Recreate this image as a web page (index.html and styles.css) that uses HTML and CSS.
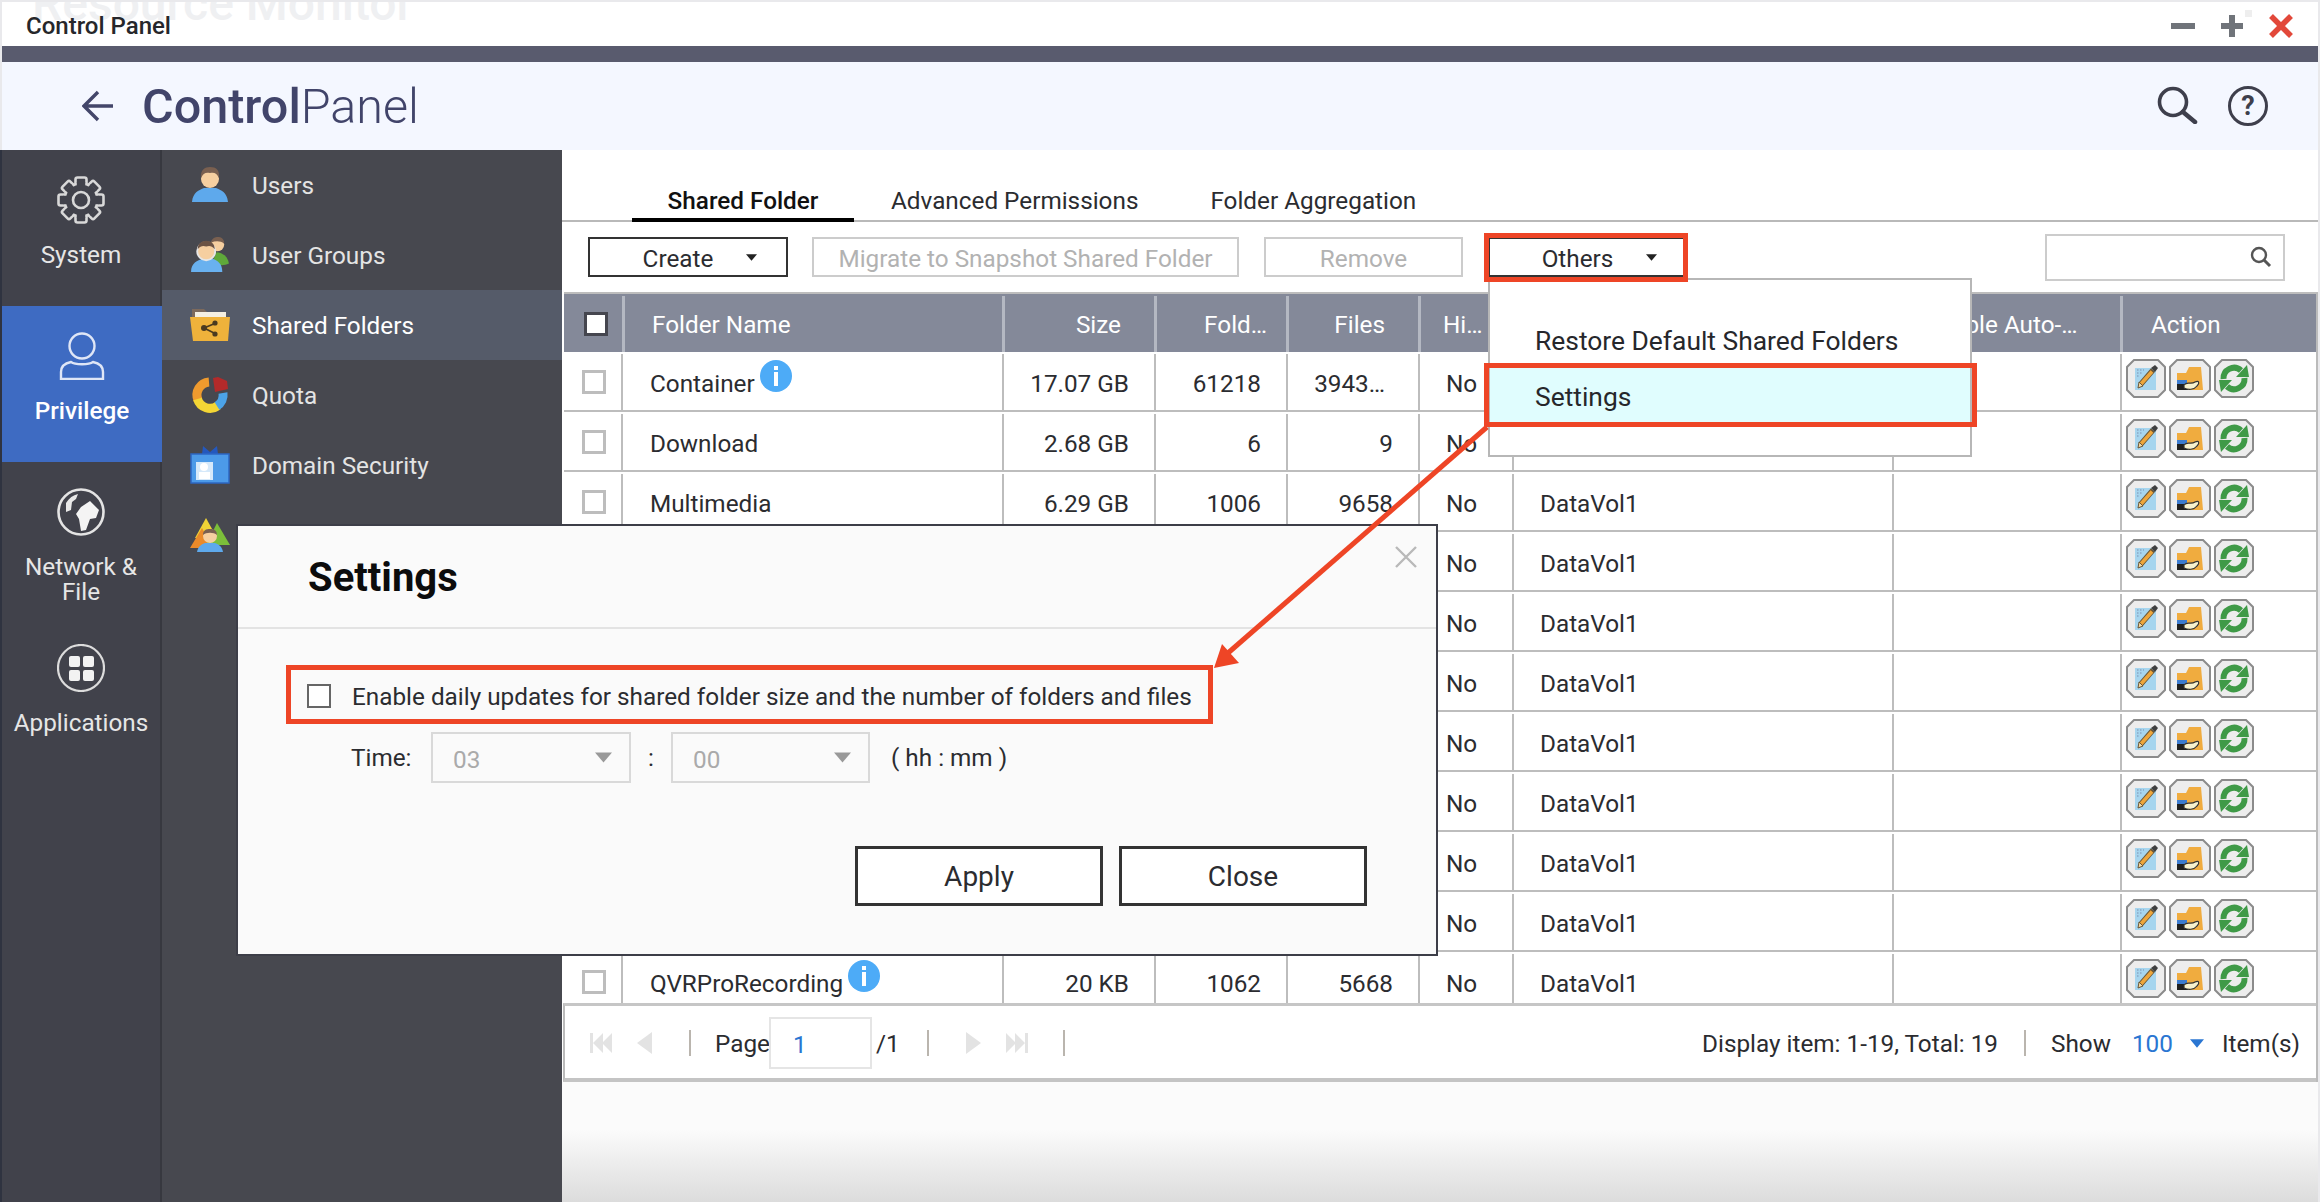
FILE: index.html
```html
<!DOCTYPE html>
<html lang="en">
<head>
<meta charset="utf-8">
<title>Control Panel</title>
<link rel="stylesheet" href="styles.css">
</head>
<body>
<svg class="defs" width="0" height="0" aria-hidden="true">
  <symbol id="act-edit" viewBox="0 0 40 39">
    <polygon points="8,1 32,1 39,8 39,31 32,38 8,38 1,31 1,8" fill="#ededed" stroke="#8b8b8b" stroke-width="2"/>
    <rect x="9" y="9" width="21" height="22" fill="#a6d5ee"/>
    <path d="M11 11h7M11 14h5M11 17h3" stroke="#8aa6c4" stroke-width="1.4" stroke-dasharray="1.5 1.5"/>
    <path d="M15 25 L27 11" stroke="#6a5636" stroke-width="5.5"/>
    <path d="M15 25 L26 12.500" stroke="#eda63c" stroke-width="3.6"/>
    <path d="M25 9 L29 6 L32 9 L29 13 Z" fill="#3f3f3f"/>
    <path d="M12 29 L13 23 L17 27 Z" fill="#f3d9a4" stroke="#6a5636" stroke-width="1"/>
  </symbol>
  <symbol id="act-folder" viewBox="0 0 42 39">
    <polygon points="8,1 34,1 41,8 41,31 34,38 8,38 1,31 1,8" fill="#ededed" stroke="#8b8b8b" stroke-width="2"/>
    <path d="M8 14 L17 14 L20 8 L32 8 L34 31 L8 31 Z" fill="#f0ac3f"/>
    <rect x="8" y="21" width="10" height="4" fill="#3b7bd0"/>
    <rect x="8" y="25" width="11" height="6" fill="#1f1f1f"/>
    <path d="M15 26 C18 22 22 26 26 23 C30 21 31 24 28 27 C25 31 19 31 15 29 Z" fill="#f7f1cc" stroke="#333" stroke-width="1.2"/>
  </symbol>
  <symbol id="act-sync" viewBox="0 0 40 39">
    <polygon points="8,1 32,1 39,8 39,31 32,38 8,38 1,31 1,8" fill="#ededed" stroke="#8b8b8b" stroke-width="2"/>
    <path d="M9.500 20 A10.500 10.500 0 0 1 27 11.500" fill="none" stroke="#3f9a47" stroke-width="6"/>
    <polygon points="22,18 35,18 33,6" fill="#3f9a47"/>
    <g transform="rotate(180 20 19.5)">
      <path d="M9.500 20 A10.500 10.500 0 0 1 27 11.500" fill="none" stroke="#3f9a47" stroke-width="6"/>
      <polygon points="22,18 35,18 33,6" fill="#3f9a47"/>
    </g>
  </symbol>
  <symbol id="info" viewBox="0 0 32 32">
    <circle cx="16" cy="16" r="16" fill="#4dabf7"/>
    <rect x="14" y="6" width="4" height="4" fill="#fff"/>
    <rect x="14" y="12" width="4" height="14" fill="#fff"/>
  </symbol>
  <symbol id="caret" viewBox="0 0 10 6"><path d="M0 0H10L5 6Z"/></symbol>
  <symbol id="skip" viewBox="0 0 22 24"><path d="M0 2h3v20H0zM13 2v20L3 12zM22 2v20L12 12z"/></symbol>
</svg>

<div class="window">
  <header class="titlebar">
    <span class="ghost-title">Resource Monitor</span>
    <span class="title-text">Control Panel</span>
    <div class="win-controls">
      <svg class="win-ico" viewBox="0 0 24 24"><path d="M0 12H24" stroke="#70747a" stroke-width="6"/></svg>
      <svg class="win-ico" viewBox="0 0 24 24"><path d="M1 12H23M12 1V23" stroke="#70747a" stroke-width="6"/></svg>
      <svg class="win-ico" viewBox="0 0 24 24"><path d="M2 2L22 22M22 2L2 22" stroke="#e2483a" stroke-width="5.5"/></svg>
    </div>
  </header>
  <div class="band"></div>
  <div class="app-header">
    <svg class="back" viewBox="0 0 32 32"><path d="M31 16H3M16 2L2 16L16 30" fill="none" stroke="#43466a" stroke-width="3.4"/></svg>
    <h1 class="app-title"><b>Control</b>Panel</h1>
    <div class="head-tools">
      <svg class="head-ico" viewBox="0 0 42 38"><circle cx="16" cy="16" r="13.5" fill="none" stroke="#3e3f4c" stroke-width="3.6"/><path d="M26 26L38 36" stroke="#3e3f4c" stroke-width="4.5" stroke-linecap="round"/></svg>
      <div class="help">?</div>
    </div>
  </div>

  <div class="main">
    <nav class="rail">
      <div class="rail-item">
        <svg class="rail-ico" viewBox="-24 -24 48 48">
          <g fill="#41424b" stroke="#d8d8d8" stroke-width="2.6">
            <rect x="-5.5" y="-22.5" width="11" height="9" rx="2"/>
            <rect x="-5.5" y="-22.5" width="11" height="9" rx="2" transform="rotate(45)"/>
            <rect x="-5.5" y="-22.5" width="11" height="9" rx="2" transform="rotate(90)"/>
            <rect x="-5.5" y="-22.5" width="11" height="9" rx="2" transform="rotate(135)"/>
            <rect x="-5.5" y="-22.5" width="11" height="9" rx="2" transform="rotate(180)"/>
            <rect x="-5.5" y="-22.5" width="11" height="9" rx="2" transform="rotate(225)"/>
            <rect x="-5.5" y="-22.5" width="11" height="9" rx="2" transform="rotate(270)"/>
            <rect x="-5.5" y="-22.5" width="11" height="9" rx="2" transform="rotate(315)"/>
            <circle r="16.5"/>
          </g>
          <g fill="#41424b">
            <rect x="-4.2" y="-18" width="8.4" height="4"/>
            <rect x="-4.2" y="-18" width="8.4" height="4" transform="rotate(45)"/>
            <rect x="-4.2" y="-18" width="8.4" height="4" transform="rotate(90)"/>
            <rect x="-4.2" y="-18" width="8.4" height="4" transform="rotate(135)"/>
            <rect x="-4.2" y="-18" width="8.4" height="4" transform="rotate(180)"/>
            <rect x="-4.2" y="-18" width="8.4" height="4" transform="rotate(225)"/>
            <rect x="-4.2" y="-18" width="8.4" height="4" transform="rotate(270)"/>
            <rect x="-4.2" y="-18" width="8.4" height="4" transform="rotate(315)"/>
          </g>
          <circle r="8" fill="none" stroke="#d8d8d8" stroke-width="2.6"/>
        </svg>
        <span>System</span>
      </div>
      <div class="rail-item active">
        <svg class="rail-ico" viewBox="0 0 48 48"><circle cx="24" cy="14" r="12.5" fill="none" stroke="#dfe6f6" stroke-width="2.4"/><path d="M3 47V40C3 33 8 31 13 30C17 33 31 33 35 30C40 31 45 33 45 40V47Z" fill="none" stroke="#dfe6f6" stroke-width="2.4"/></svg>
        <span>Privilege</span>
      </div>
      <div class="rail-item">
        <svg class="rail-ico" viewBox="0 0 48 48"><circle cx="24" cy="24" r="22.5" fill="none" stroke="#e4e4e4" stroke-width="2.6"/><path d="M9 15C12 10 16 7 21 6L19 11L15 14L14 22L9 24Z" fill="#e8e8e8"/><path d="M24 19L33 13L42 22L39 30L33 31L29 42L24 43L22 31L19 26Z" fill="#f4f4f4"/></svg>
        <span>Network &amp;<br>File</span>
      </div>
      <div class="rail-item">
        <svg class="rail-ico" viewBox="0 0 48 48"><circle cx="24" cy="24" r="23" fill="none" stroke="#dcdcdc" stroke-width="2.2"/><g fill="#f2f2f2"><rect x="12" y="12" width="11" height="11" rx="2"/><rect x="26" y="12" width="11" height="11" rx="2"/><rect x="12" y="26" width="11" height="11" rx="2"/><rect x="26" y="26" width="11" height="11" rx="2"/></g></svg>
        <span>Applications</span>
      </div>
    </nav>

    <nav class="subnav">
      <div class="sub-item">
        <svg class="sub-ico" viewBox="0 0 40 36"><path d="M2 35C3 25 9 23 14 21H26C31 23 37 25 38 35Z" fill="#5ea9ec"/><circle cx="20" cy="12" r="9" fill="#f6cfa0"/><path d="M11 11C10 3 15 0 20 0C26 0 30 3 29 11C27 6 24 5 20 6C16 5 13 6 11 11Z" fill="#7a6050"/></svg>
        <span>Users</span>
      </div>
      <div class="sub-item">
        <svg class="sub-ico" viewBox="0 0 40 38"><path d="M22 27L27 16C32 16 39 20 40 28C34 31 28 30 22 27Z" fill="#5fa83a"/><circle cx="28" cy="8" r="7" fill="#f6cfa0"/><path d="M21 6C22 1 26 0 28 0C32 0 35 2 35 7C31 4 26 4 21 6Z" fill="#7a6050"/><path d="M0 37C0 27 7 25 12 23H23C28 25 33 28 33 37Z" fill="#69b1ef"/><circle cx="16" cy="15" r="9.5" fill="#f6cfa0" stroke="#e6e6e6" stroke-width="2"/><path d="M7 13C7 7 11 4 16 4C21 4 25 7 25 13C22 9 19 9 16 10C13 9 10 9 7 13Z" fill="#6c5344"/></svg>
        <span>User Groups</span>
      </div>
      <div class="sub-item current">
        <svg class="sub-ico" viewBox="0 0 40 32"><path d="M2 0H14L17 3H36V10H2Z" fill="#7d6a5c"/><rect x="5" y="3" width="31" height="8" fill="#f4efe2"/><path d="M0 8H40L38 32H3Z" fill="#efb23b"/><g stroke="#4a3a20" stroke-width="1.8"><path d="M14 19L26 14M14 19L26 25"/></g><g fill="#4a3a20"><circle cx="14" cy="19" r="3"/><circle cx="25" cy="14" r="2.6"/><circle cx="25" cy="25" r="2.6"/></g></svg>
        <span>Shared Folders</span>
      </div>
      <div class="sub-item">
        <svg class="sub-ico" viewBox="0 0 36 36">
          <g fill="none" stroke-width="9"><path d="M6 23A13 13 0 0 1 17 5" stroke="#ef9a2e"/><path d="M5.500 22A13 13 0 0 0 26 28.500" stroke="#f4d635"/><path d="M25 29A13 13 0 0 0 31 16" stroke="#4ca3e8"/></g>
          <path d="M21 1L26 0L35 4L36 12L23 15Z" fill="#b32a2a"/>
        </svg>
        <span>Quota</span>
      </div>
      <div class="sub-item">
        <svg class="sub-ico tall" viewBox="0 0 40 38"><path d="M13 0L20 6L27 0L28 8H12Z" fill="#2458bd"/><rect x="1" y="8" width="38" height="29" fill="#4c9ae8" stroke="#2c66c2" stroke-width="1.5"/><rect x="6" y="16" width="17" height="18" fill="#d6e9fa"/><circle cx="14" cy="21" r="4" fill="#fff"/><rect x="9" y="26" width="11" height="7" fill="#fff"/></svg>
        <span>Domain Security</span>
      </div>
      <div class="sub-item">
        <svg class="sub-ico" viewBox="0 0 40 34"><path d="M16 0L27 20H5Z" fill="#efd336"/><path d="M12 10L23 30H0Z" fill="#ea8a2a"/><path d="M27 5L40 27H16Z" fill="#7cbf3a"/><path d="M7 34C8 28 12 26 15 25H25C28 26 32 28 33 34Z" fill="#5ea9ec"/><circle cx="20" cy="18" r="7" fill="#f6cfa0"/><path d="M13 17C13 12 16 11 20 11C24 11 27 12 27 17C24 14 16 14 13 17Z" fill="#7a6050"/></svg>
      </div>
    </nav>

    <section class="content">
      <div class="tabs">
        <div class="tab selected">Shared Folder</div>
        <div class="tab">Advanced Permissions</div>
        <div class="tab">Folder Aggregation</div>
      </div>
      <div class="toolbar">
        <div class="btn w-create"><span>Create</span><svg class="caret"><use href="#caret"/></svg></div>
        <div class="btn off w-migrate">Migrate to Snapshot Shared Folder</div>
        <div class="btn off w-remove">Remove</div>
        <div class="btn w-others"><span>Others</span><svg class="caret"><use href="#caret"/></svg></div>
        <div class="search">
          <svg class="search-ico" viewBox="0 0 22 22"><circle cx="9" cy="9" r="7" fill="none" stroke="#555" stroke-width="2.4"/><path d="M14 14L20 20" stroke="#555" stroke-width="3"/></svg>
        </div>
      </div>

      <div class="grid">
        <div class="thead">
          <div class="th"><i class="box dark"></i></div>
          <div class="th pl">Folder Name</div>
          <div class="th r pr34">Size</div>
          <div class="th r pr19">Fold…</div>
          <div class="th r pr33">Files</div>
          <div class="th hid">Hi…</div>
          <div class="th"></div>
          <div class="th auto">Enable Auto-…</div>
          <div class="th act">Action</div>
        </div>
        <div class="tbody">
          <div class="row"><div class="td c"><i class="box"></i></div><div class="td pl name">Container<svg class="info"><use href="#info"/></svg></div><div class="td r">17.07 GB</div><div class="td r">61218</div><div class="td r pr34">3943…</div><div class="td no">No</div><div class="td vol"></div><div class="td"></div><div class="td acts"><svg class="a1"><use href="#act-edit"/></svg><svg class="a2"><use href="#act-folder"/></svg><svg class="a1"><use href="#act-sync"/></svg></div></div>
          <div class="row"><div class="td c"><i class="box"></i></div><div class="td pl">Download</div><div class="td r">2.68 GB</div><div class="td r">6</div><div class="td r">9</div><div class="td no">No</div><div class="td vol"></div><div class="td"></div><div class="td acts"><svg class="a1"><use href="#act-edit"/></svg><svg class="a2"><use href="#act-folder"/></svg><svg class="a1"><use href="#act-sync"/></svg></div></div>
          <div class="row"><div class="td c"><i class="box"></i></div><div class="td pl">Multimedia</div><div class="td r">6.29 GB</div><div class="td r">1006</div><div class="td r">9658</div><div class="td no">No</div><div class="td vol">DataVol1</div><div class="td"></div><div class="td acts"><svg class="a1"><use href="#act-edit"/></svg><svg class="a2"><use href="#act-folder"/></svg><svg class="a1"><use href="#act-sync"/></svg></div></div>
          <div class="row"><div class="td c"></div><div class="td"></div><div class="td"></div><div class="td"></div><div class="td"></div><div class="td no">No</div><div class="td vol">DataVol1</div><div class="td"></div><div class="td acts"><svg class="a1"><use href="#act-edit"/></svg><svg class="a2"><use href="#act-folder"/></svg><svg class="a1"><use href="#act-sync"/></svg></div></div>
          <div class="row"><div class="td c"></div><div class="td"></div><div class="td"></div><div class="td"></div><div class="td"></div><div class="td no">No</div><div class="td vol">DataVol1</div><div class="td"></div><div class="td acts"><svg class="a1"><use href="#act-edit"/></svg><svg class="a2"><use href="#act-folder"/></svg><svg class="a1"><use href="#act-sync"/></svg></div></div>
          <div class="row"><div class="td c"></div><div class="td"></div><div class="td"></div><div class="td"></div><div class="td"></div><div class="td no">No</div><div class="td vol">DataVol1</div><div class="td"></div><div class="td acts"><svg class="a1"><use href="#act-edit"/></svg><svg class="a2"><use href="#act-folder"/></svg><svg class="a1"><use href="#act-sync"/></svg></div></div>
          <div class="row"><div class="td c"></div><div class="td"></div><div class="td"></div><div class="td"></div><div class="td"></div><div class="td no">No</div><div class="td vol">DataVol1</div><div class="td"></div><div class="td acts"><svg class="a1"><use href="#act-edit"/></svg><svg class="a2"><use href="#act-folder"/></svg><svg class="a1"><use href="#act-sync"/></svg></div></div>
          <div class="row"><div class="td c"></div><div class="td"></div><div class="td"></div><div class="td"></div><div class="td"></div><div class="td no">No</div><div class="td vol">DataVol1</div><div class="td"></div><div class="td acts"><svg class="a1"><use href="#act-edit"/></svg><svg class="a2"><use href="#act-folder"/></svg><svg class="a1"><use href="#act-sync"/></svg></div></div>
          <div class="row"><div class="td c"></div><div class="td"></div><div class="td"></div><div class="td"></div><div class="td"></div><div class="td no">No</div><div class="td vol">DataVol1</div><div class="td"></div><div class="td acts"><svg class="a1"><use href="#act-edit"/></svg><svg class="a2"><use href="#act-folder"/></svg><svg class="a1"><use href="#act-sync"/></svg></div></div>
          <div class="row"><div class="td c"></div><div class="td"></div><div class="td"></div><div class="td"></div><div class="td"></div><div class="td no">No</div><div class="td vol">DataVol1</div><div class="td"></div><div class="td acts"><svg class="a1"><use href="#act-edit"/></svg><svg class="a2"><use href="#act-folder"/></svg><svg class="a1"><use href="#act-sync"/></svg></div></div>
          <div class="row"><div class="td c"><i class="box"></i></div><div class="td pl name">QVRProRecording<svg class="info"><use href="#info"/></svg></div><div class="td r">20 KB</div><div class="td r">1062</div><div class="td r">5668</div><div class="td no">No</div><div class="td vol">DataVol1</div><div class="td"></div><div class="td acts"><svg class="a1"><use href="#act-edit"/></svg><svg class="a2"><use href="#act-folder"/></svg><svg class="a1"><use href="#act-sync"/></svg></div></div>
        </div>
        <div class="pager">
          <svg class="pg skip"><use href="#skip"/></svg>
          <svg class="pg prev" viewBox="0 0 15 24"><path d="M15 1V23L0 12Z"/></svg>
          <i class="sep s1"></i>
          <span class="pg-label">Page</span>
          <div class="pg-input">1</div>
          <span class="pg-total">/1</span>
          <i class="sep s2"></i>
          <svg class="pg next" viewBox="0 0 15 24"><path d="M0 1V23L15 12Z"/></svg>
          <svg class="pg skip flip"><use href="#skip"/></svg>
          <i class="sep s3"></i>
          <span class="pg-info">Display item: 1-19, Total: 19</span>
          <i class="sep s4"></i>
          <span>Show</span>
          <span class="pg-num">100</span>
          <svg class="pg-caret"><use href="#caret"/></svg>
          <span class="pg-items">Item(s)</span>
        </div>
      </div>
      <div class="below"></div>
    </section>
  </div>
</div>

<div class="menu">
  <div class="menu-item">Restore Default Shared Folders</div>
  <div class="menu-item hot">Settings</div>
</div>

<div class="dialog">
  <div class="dlg-head">
    <h2>Settings</h2>
    <svg class="dlg-x" viewBox="0 0 22 22"><path d="M1 1L21 21M21 1L1 21" stroke="#b9b9b9" stroke-width="2.4"/></svg>
  </div>
  <div class="dlg-body">
    <div class="dlg-check"><i class="box gray"></i><span>Enable daily updates for shared folder size and the number of folders and files</span></div>
    <div class="dlg-time">
      <span class="time-label">Time:</span>
      <div class="sel">03<svg class="sel-caret"><use href="#caret"/></svg></div>
      <span class="colon">:</span>
      <div class="sel s-b">00<svg class="sel-caret"><use href="#caret"/></svg></div>
      <span class="hhmm">( hh : mm )</span>
    </div>
    <div class="dlg-btns">
      <div class="dlg-btn">Apply</div>
      <div class="dlg-btn">Close</div>
    </div>
  </div>
</div>

<div class="mark m-others"></div>
<div class="mark m-settings"></div>
<div class="mark m-check"></div>
<svg class="arrow" viewBox="0 0 290 270"><path d="M283 7L24 233" stroke="#ee4526" stroke-width="5" fill="none"/><polygon points="10,248 18,224 35,243" fill="#ee4526"/></svg>
</body>
</html>
```
FILE: styles.css
```css
* { box-sizing: border-box; }
html, body { margin: 0; height: 100%; }
body {
  width: 2320px; height: 1202px; overflow: hidden; position: relative;
  font-family: Roboto, "Liberation Sans", sans-serif; font-size: 24.3px; color: #2b2c30;
  background: #e9e9ec; padding: 2px 2px 0;
}
body::before { content: ""; position: absolute; left: 0; top: 150px; width: 2px; bottom: 0; background: #2f3340; }
.defs { position: absolute; }
.box { display: block; width: 24px; height: 24px; background: #fff; border: 3px solid #bdbdbd; flex: none; }
.box.dark { border-color: #45464f; }
.box.gray { border: 2px solid #666; background: #fff; }

.window { height: 1200px; display: flex; flex-direction: column; }
.titlebar { height: 44px; flex: none; background: #fff; position: relative; overflow: hidden; display: flex; align-items: center; padding: 4px 25px 0 24px; }
.titlebar::after { content: ""; position: absolute; right: 66px; top: 8px; width: 7px; height: 7px; background: #eee; }
.ghost-title { position: absolute; left: 30px; top: -22px; font-size: 48px; line-height: 48px; color: #eff0f2; font-weight: 500; }
.title-text { position: relative; font-size: 24px; font-weight: 500; color: #26272b; }
.win-controls { margin-left: auto; display: flex; gap: 25px; align-items: center; }
.win-ico { width: 24px; height: 24px; display: block; }
.band { height: 16px; flex: none; background: #595b6e; }
.app-header { height: 88px; flex: none; background: #f4f7ff; display: flex; align-items: center; padding: 0 50px 0 80px; }
.back { width: 32px; height: 32px; margin-right: 28px; }
.app-title { margin: 0; font-size: 48.5px; font-weight: 300; color: #41446a; }
.app-title b { font-weight: 500; }
.head-tools { margin-left: auto; display: flex; align-items: center; gap: 29px; }
.head-ico { width: 42px; height: 38px; margin-top: -2px; }
.help { width: 40px; height: 40px; border: 3.5px solid #3e3f4c; border-radius: 50%; display: flex; align-items: center; justify-content: center; font-size: 27px; font-weight: 700; color: #3e3f4c; }

.main { flex: 1; min-height: 0; display: flex; }
.rail { width: 160px; flex: none; background: #41424b; border-right: 2px solid #37383f; }
.rail-item { height: 156px; padding-top: 26px; display: flex; flex-direction: column; align-items: center; color: #e6e6e6; line-height: 25px; text-align: center; }
.rail-item.active { background: #3e6bc2; color: #fff; font-weight: 500; margin-right: -2px; position: relative; }
.rail-ico { width: 48px; height: 48px; margin-bottom: 18px; flex: none; }
.subnav { width: 400px; flex: none; background: #47484f; }
.sub-item { height: 70px; display: flex; align-items: center; padding-left: 28px; gap: 22px; color: #e4e4e4; }
.sub-item span { padding-top: 1px; }
.sub-item.current { background: #555b69; color: #fff; }
.sub-ico { width: 40px; height: 36px; flex: none; }
.sub-ico.tall { height: 38px; }

.content { flex: 1; min-width: 0; display: flex; flex-direction: column; background: #fff; }
.tabs { height: 72px; flex: none; display: flex; align-items: flex-end; padding-left: 70px; border-bottom: 2px solid #b9b9b9; }
.tab { height: 41px; padding: 0 36px; line-height: 40px; margin-bottom: -2px; color: #2b2c30; }
.tab.selected { color: #111; font-weight: 500; border-bottom: 4px solid #000; height: 41px; width: 222px; text-align: center; padding: 0; margin-right: 1px; }
.toolbar { height: 70px; flex: none; display: flex; align-items: center; padding: 0 33px 0 26px; }
.btn { height: 40px; border: 2px solid #333; display: flex; align-items: center; justify-content: center; position: relative; padding-top: 3px; }
.btn.off { border-color: #ccc; color: #b2b2b2; }
.w-create { width: 200px; margin-right: 24px; padding-right: 20px; }
.w-migrate { width: 427px; margin-right: 25px; }
.w-remove { width: 199px; margin-right: 25px; }
.w-others { width: 197px; padding-right: 18px; }
.caret { position: absolute; right: 29px; top: 15px; width: 11px; height: 7px; fill: #222; }
.w-others .caret { right: 26px; }
.search { margin-left: auto; width: 240px; height: 47px; border: 2px solid #ccc; display: flex; align-items: center; justify-content: flex-end; padding-right: 11px; }
.search-ico { width: 22px; height: 22px; }

.grid { flex: none; margin-left: 2px; border-right: 2px solid #bbb; border-top: 2px solid #bdbdbd; }
.thead, .row { display: grid; grid-template-columns: 59px 381px 152px 132px 132px 94px 380px 228px 1fr; }
.thead { height: 58px; background: #848999; color: #fff; grid-template-columns: 61px 380px 152px 132px 132px 94px 380px 228px 1fr; }
.th { border-right: 3px solid #b4b8c2; margin-top: 2px; display: flex; align-items: center; white-space: nowrap; }
.th:first-child { padding-left: 20px; }
.th:last-child { border-right: 0; }
.pl { padding-left: 27px; }
.r { justify-content: flex-end; padding-right: 25px; }
.pr34 { padding-right: 33px; }
.pr19 { padding-right: 19px; }
.pr33 { padding-right: 33px; }
.hid { padding-left: 22px; overflow: hidden; }
.auto { padding-left: 30px; }
.act { padding-left: 28px; }
.tbody { height: 651px; overflow: hidden; }
.row { height: 60px; border-bottom: 2px solid #bdbdbd; padding-top: 2px; }
.td { border-right: 2px solid #bdbdbd; display: flex; align-items: center; white-space: nowrap; padding-top: 2px; }
.td:last-child { border-right: 0; }
.c { padding-left: 18px; padding-top: 0; }
.name { position: relative; }
.info { width: 32px; height: 32px; margin: -14px 0 0 5px; }
.no { padding-left: 26px; }
.vol { padding-left: 26px; }
.acts { padding-left: 4px; gap: 3px; align-items: flex-start; padding-top: 5px; }
.a1 { width: 40px; height: 39px; }
.a2 { width: 42px; height: 39px; }

.pager { height: 79px; border-top: 3px solid #c6c6c6; border-bottom: 4px solid #c4c4c4; display: flex; align-items: center; position: relative; padding: 2px 0 0 25px; margin-left: -1px; border-left: 2px solid #bbb; }
.pg { fill: #e3e3e3; flex: none; }
.skip { width: 22px; height: 24px; }
.flip { transform: scaleX(-1); }
.prev { width: 15px; height: 24px; margin-left: 25px; }
.next { width: 15px; height: 24px; margin-left: 37px; }
.next + .skip { margin-left: 25px; }
.sep { display: block; width: 2px; height: 26px; background: #bab5ae; flex: none; }
.s1 { margin-left: 37px; }
.pg-label { margin-left: 24px; width: 54px; }
.pg-input { width: 103px; height: 52px; border: 2px solid #e5e5e5; padding-left: 22px; line-height: 51px; color: #2a76d2; }
.pg-total { margin-left: 4px; width: 20px; }
.s2 { margin-left: 31px; }
.s3 { margin-left: 35px; }
.pg-info { margin-left: auto; }
.s4 { margin: 0 25px 0 26px; }
.pg-num { margin-left: 21px; color: #2a76d2; }
.pg-caret { width: 14px; height: 9px; margin-left: 17px; fill: #2a76d2; }
.pg-items { margin: 0 16px 0 18px; }
.below { flex: 1; background: linear-gradient(#fbfbfb 40%, #dcdcdc); }

.menu { position: absolute; left: 1488px; top: 278px; width: 484px; height: 179px; background: #fff; border: 2px solid #b7b7b7; padding-top: 36px; font-size: 26.4px; }
.menu-item { height: 50px; line-height: 50px; padding-left: 45px; color: #26272b; }
.menu-item.hot { height: 58px; line-height: 62px; background: #e0fdfe; }

.dialog { position: absolute; left: 236px; top: 524px; width: 1202px; height: 432px; background: #fafafa; border: 2px solid #3d3e48; }
.dlg-head { height: 103px; border-bottom: 2px solid #e3e3e3; display: flex; align-items: center; padding: 2px 20px 0 70px; position: relative; }
.dlg-head h2 { margin: 0; font-size: 40px; font-weight: 700; color: #0c0c0c; }
.dlg-x { position: absolute; right: 19px; top: 20px; width: 22px; height: 22px; }
.dlg-body { display: flex; flex-direction: column; padding-top: 47px; }
.dlg-check { height: 40px; display: flex; align-items: center; padding-left: 69px; gap: 21px; }
.dlg-time { height: 51px; margin-top: 16px; display: flex; align-items: center; padding-left: 113px; }
.time-label { width: 80px; }
.sel { width: 200px; height: 51px; border: 2px solid #d9d9d9; color: #aaa; display: flex; align-items: center; padding: 3px 0 0 20px; position: relative; }
.sel.s-b { width: 199px; }
.sel-caret { position: absolute; right: 17px; top: 18px; width: 17px; height: 11px; fill: #999; }
.colon { width: 40px; text-align: center; }
.hhmm { margin-left: 21px; }
.dlg-btns { display: flex; justify-content: flex-end; gap: 16px; margin-top: 63px; padding-right: 69px; }
.dlg-btn { width: 248px; height: 60px; border: 3px solid #333; background: #fff; font-size: 28px; display: flex; align-items: center; justify-content: center; color: #2b2c30; }

.mark { position: absolute; border: 5px solid #ee4526; pointer-events: none; }
.m-others { left: 1484px; top: 233px; width: 204px; height: 49px; }
.m-settings { left: 1484px; top: 363px; width: 493px; height: 64px; }
.m-check { left: 286px; top: 665px; width: 927px; height: 59px; }
.arrow { position: absolute; left: 1204px; top: 420px; width: 290px; height: 270px; pointer-events: none; }
```
